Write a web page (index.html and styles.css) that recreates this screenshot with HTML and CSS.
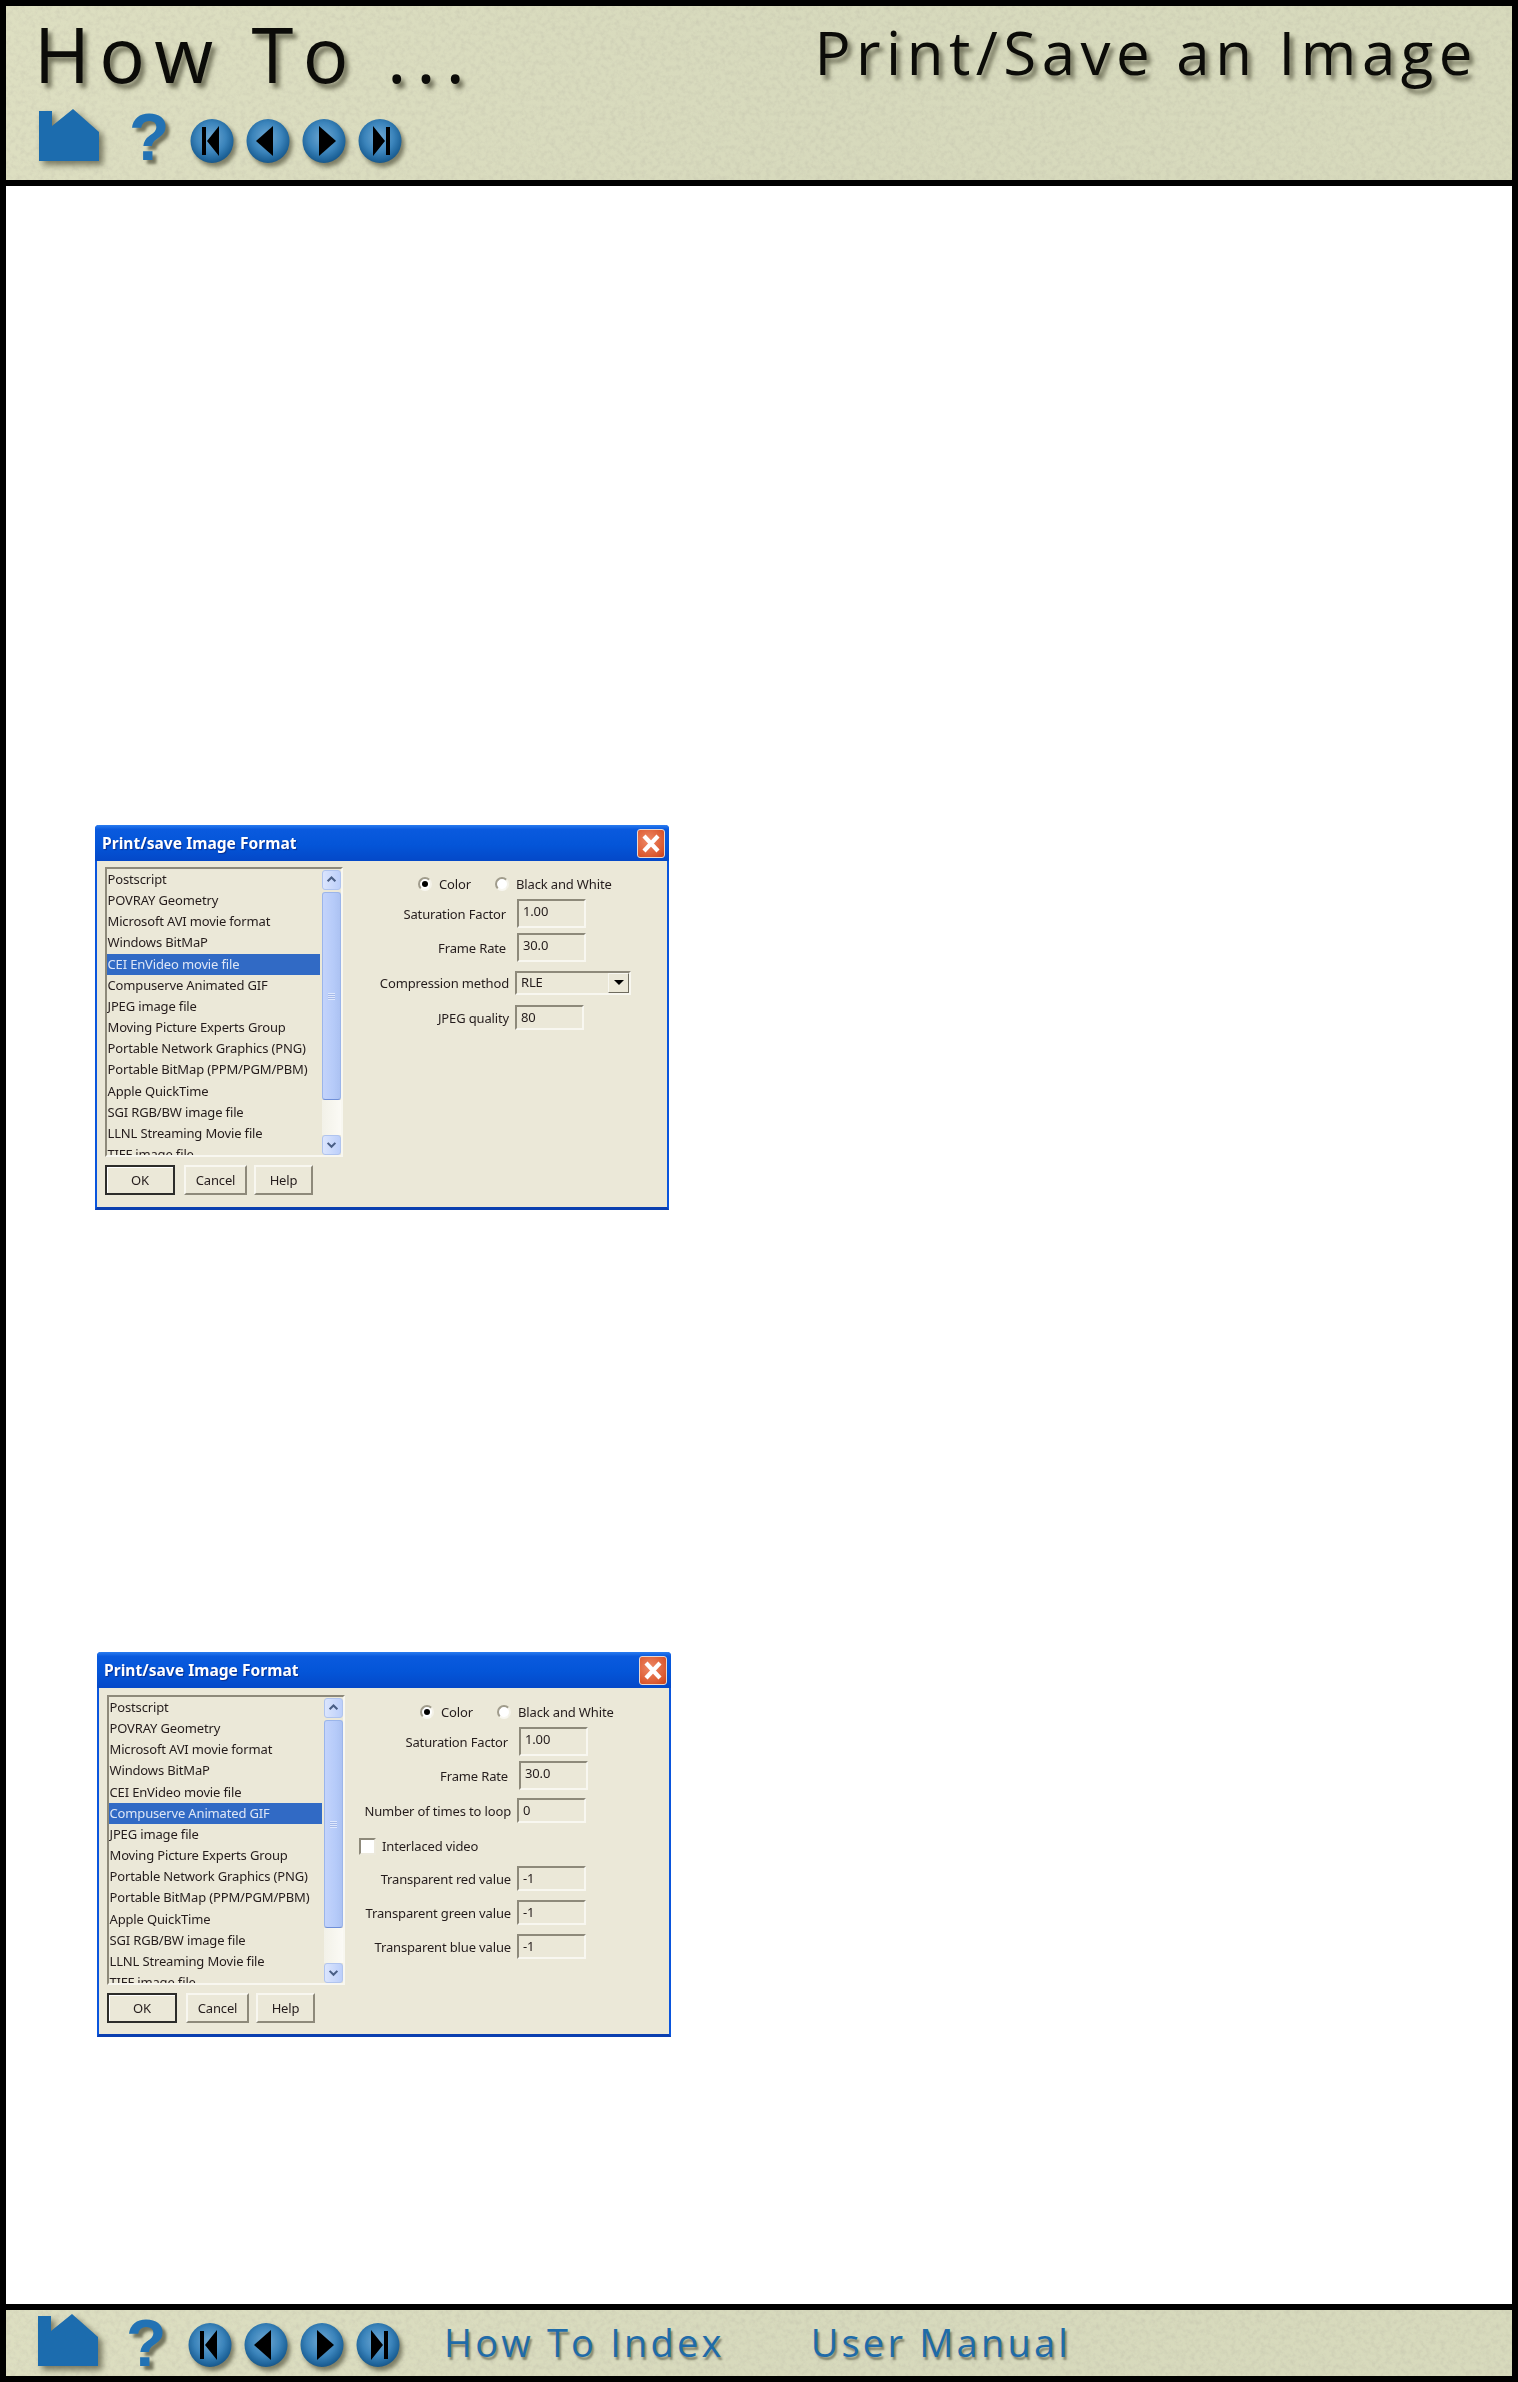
FILE: index.html
```
<!DOCTYPE html>
<html lang="en">
<head>
<meta charset="utf-8">
<title>How To Print/Save an Image</title>
<link rel="stylesheet" href="styles.css">
</head>
<body>
<svg class="defs" width="0" height="0" aria-hidden="true">
  <defs>
    <radialGradient id="orb" cx="0.48" cy="0.42" r="0.62">
      <stop offset="0" stop-color="#6fa9d4"/>
      <stop offset="0.55" stop-color="#3b84bb"/>
      <stop offset="0.85" stop-color="#1d6298"/>
      <stop offset="1" stop-color="#164f7e"/>
    </radialGradient>
    <symbol id="house" viewBox="0 0 60 52">
      <path d="M0 2H13V17L34 0L60 23V52H0Z" fill="#1c6cae"/>
    </symbol>
    <symbol id="first" viewBox="0 0 44 44">
      <ellipse cx="22" cy="22" rx="21.5" ry="22" fill="url(#orb)"/>
      <path d="M12 8H16V36H12ZM29 7V37L17 22Z" fill="#000"/>
    </symbol>
    <symbol id="prev" viewBox="0 0 44 44">
      <ellipse cx="22" cy="22" rx="21.5" ry="22" fill="url(#orb)"/>
      <path d="M27 7V37L10 22Z" fill="#000"/>
    </symbol>
    <symbol id="next" viewBox="0 0 44 44">
      <ellipse cx="22" cy="22" rx="21.5" ry="22" fill="url(#orb)"/>
      <path d="M17 7V37L34 22Z" fill="#000"/>
    </symbol>
    <symbol id="last" viewBox="0 0 44 44">
      <ellipse cx="22" cy="22" rx="21.5" ry="22" fill="url(#orb)"/>
      <path d="M15 7V37L27 22ZM28 8H32V36H28Z" fill="#000"/>
    </symbol>
    <symbol id="scroll-up" viewBox="0 0 19 21">
      <path d="M5 12L9.5 7.5L14 12" fill="none" stroke="#4a5f86" stroke-width="2.4"/>
    </symbol>
    <symbol id="scroll-down" viewBox="0 0 19 21">
      <path d="M5 8L9.5 12.5L14 8" fill="none" stroke="#4a5f86" stroke-width="2.4"/>
    </symbol>
    <symbol id="close" viewBox="0 0 28 29">
      <path d="M7 7L21 22M21 7L7 22" stroke="#fff" stroke-width="4.2" fill="none"/>
    </symbol>
  </defs>
</svg>

<div class="page">
  <header class="banner banner-top">
    <div class="title-row">
      <div class="how-to">How To ...</div>
      <div class="topic">Print/Save an Image</div>
    </div>
    <nav class="nav nav-top">
      <svg class="ico-house"><use href="#house"/></svg>
      <span class="ico-help">?</span>
      <div class="orbs">
        <svg class="ico-orb"><use href="#first"/></svg>
        <svg class="ico-orb"><use href="#prev"/></svg>
        <svg class="ico-orb"><use href="#next"/></svg>
        <svg class="ico-orb"><use href="#last"/></svg>
      </div>
    </nav>
  </header>

  <main class="content">
    <section class="dialog dialog-a">
      <div class="titlebar">
        <span class="title-text">Print/save Image Format</span>
        <span class="close-btn"><svg class="close-x"><use href="#close"/></svg></span>
      </div>
      <div class="body">
        <div class="left">
          <div class="listbox">
            <ul class="list">
              <li>Postscript</li>
              <li>POVRAY Geometry</li>
              <li>Microsoft AVI movie format</li>
              <li>Windows BitMaP</li>
              <li class="sel">CEI EnVideo movie file</li>
              <li>Compuserve Animated GIF</li>
              <li>JPEG image file</li>
              <li>Moving Picture Experts Group</li>
              <li>Portable Network Graphics (PNG)</li>
              <li>Portable BitMap (PPM/PGM/PBM)</li>
              <li>Apple QuickTime</li>
              <li>SGI RGB/BW image file</li>
              <li>LLNL Streaming Movie file</li>
              <li>TIFF image file</li>
            </ul>
            <div class="scrollbar">
              <div class="sb-btn"><svg class="sb-arrow"><use href="#scroll-up"/></svg></div>
              <div class="sb-thumb"><span class="grip"></span></div>
              <div class="sb-track"></div>
              <div class="sb-btn"><svg class="sb-arrow"><use href="#scroll-down"/></svg></div>
            </div>
          </div>
          <div class="buttons">
            <button class="btn btn-ok">OK</button>
            <button class="btn btn-cancel">Cancel</button>
            <button class="btn btn-help">Help</button>
          </div>
        </div>
        <div class="form">
          <div class="radios">
            <span class="radio radio-on"></span><span class="radio-label">Color</span>
            <span class="radio"></span><span class="radio-label">Black and White</span>
          </div>
          <div class="row row-tall"><span class="lbl">Saturation Factor</span><span class="field">1.00</span></div>
          <div class="row row-tall"><span class="lbl">Frame Rate</span><span class="field">30.0</span></div>
          <div class="row row-short row-gap8"><span class="lbl">Compression method</span>
            <span class="select">RLE<span class="select-btn"><span class="caret"></span></span></span></div>
          <div class="row row-short row-gap10"><span class="lbl">JPEG quality</span><span class="field">80</span></div>
        </div>
      </div>
    </section>

    <section class="dialog dialog-b">
      <div class="titlebar">
        <span class="title-text">Print/save Image Format</span>
        <span class="close-btn"><svg class="close-x"><use href="#close"/></svg></span>
      </div>
      <div class="body">
        <div class="left">
          <div class="listbox">
            <ul class="list">
              <li>Postscript</li>
              <li>POVRAY Geometry</li>
              <li>Microsoft AVI movie format</li>
              <li>Windows BitMaP</li>
              <li>CEI EnVideo movie file</li>
              <li class="sel">Compuserve Animated GIF</li>
              <li>JPEG image file</li>
              <li>Moving Picture Experts Group</li>
              <li>Portable Network Graphics (PNG)</li>
              <li>Portable BitMap (PPM/PGM/PBM)</li>
              <li>Apple QuickTime</li>
              <li>SGI RGB/BW image file</li>
              <li>LLNL Streaming Movie file</li>
              <li>TIFF image file</li>
            </ul>
            <div class="scrollbar">
              <div class="sb-btn"><svg class="sb-arrow"><use href="#scroll-up"/></svg></div>
              <div class="sb-thumb"><span class="grip"></span></div>
              <div class="sb-track"></div>
              <div class="sb-btn"><svg class="sb-arrow"><use href="#scroll-down"/></svg></div>
            </div>
          </div>
          <div class="buttons">
            <button class="btn btn-ok">OK</button>
            <button class="btn btn-cancel">Cancel</button>
            <button class="btn btn-help">Help</button>
          </div>
        </div>
        <div class="form">
          <div class="radios">
            <span class="radio radio-on"></span><span class="radio-label">Color</span>
            <span class="radio"></span><span class="radio-label">Black and White</span>
          </div>
          <div class="row row-tall"><span class="lbl">Saturation Factor</span><span class="field">1.00</span></div>
          <div class="row row-tall"><span class="lbl">Frame Rate</span><span class="field">30.0</span></div>
          <div class="row row-short row-gap8"><span class="lbl">Number of times to loop</span><span class="field">0</span></div>
          <div class="check-row"><span class="checkbox"></span><span class="check-label">Interlaced video</span></div>
          <div class="row row-short row-gap11"><span class="lbl">Transparent red value</span><span class="field">-1</span></div>
          <div class="row row-short row-gap9"><span class="lbl">Transparent green value</span><span class="field">-1</span></div>
          <div class="row row-short row-gap9"><span class="lbl">Transparent blue value</span><span class="field">-1</span></div>
        </div>
      </div>
    </section>
  </main>

  <footer class="banner banner-bottom">
    <nav class="nav nav-bottom">
      <svg class="ico-house ico-house-foot"><use href="#house"/></svg>
      <span class="ico-help ico-help-foot">?</span>
      <div class="orbs orbs-foot">
        <svg class="ico-orb"><use href="#first"/></svg>
        <svg class="ico-orb"><use href="#prev"/></svg>
        <svg class="ico-orb"><use href="#next"/></svg>
        <svg class="ico-orb"><use href="#last"/></svg>
      </div>
      <a class="foot-link foot-index">How To Index</a>
      <a class="foot-link foot-manual">User Manual</a>
    </nav>
  </footer>
</div>
</body>
</html>
```

FILE: styles.css
```
* { box-sizing: border-box; }

html, body { margin: 0; padding: 0; background: #fff; }

.defs { position: absolute; }

.page {
  width: 1518px;
  height: 2382px;
  border: 6px solid #000;
  display: flex;
  flex-direction: column;
  background: #fff;
  overflow: hidden;
}

.banner {
  background-color: #dadcc0;
  background-image:
    linear-gradient(90deg, rgba(230,230,196,.25), rgba(206,210,178,.25) 55%, rgba(208,212,178,.25)),
    url("data:image/svg+xml,%3Csvg xmlns='http://www.w3.org/2000/svg' width='400' height='200'%3E%3Cfilter id='n' x='0' y='0' width='100%25' height='100%25'%3E%3CfeTurbulence type='fractalNoise' baseFrequency='.2' numOctaves='3' seed='7' stitchTiles='stitch'/%3E%3CfeColorMatrix values='0 0 0 0 .6 0 0 0 0 .6 0 0 0 0 .46 1.9 0 0 0 -.75'/%3E%3C/filter%3E%3Crect width='400' height='200' filter='url(%23n)'/%3E%3C/svg%3E");
}

.banner-top {
  flex: none;
  height: 180px;
  border-bottom: 6px solid #000;
  padding-left: 28px;
  padding-right: 34px;
}

.title-row {
  display: flex;
  justify-content: space-between;
  height: 103px;
}

.how-to {
  font-family: "Open Sans", "Liberation Sans", sans-serif;
  font-weight: 400;
  font-size: 76px;
  line-height: 96px;
  letter-spacing: 9.3px;
  color: #0b0b08;
  white-space: nowrap;
  text-shadow: 4px 5px 4px rgba(50,50,30,.6);
}

.topic {
  font-family: "Open Sans", "Liberation Sans", sans-serif;
  font-weight: 400;
  font-size: 60px;
  line-height: 92px;
  letter-spacing: 5.5px;
  color: #0b0b08;
  white-space: nowrap;
  text-shadow: 4px 5px 4px rgba(50,50,30,.6);
}

.nav { display: flex; align-items: flex-start; }

.nav-top { padding-left: 5px; }

.ico-house {
  flex: none;
  width: 60px;
  height: 52px;
  overflow: visible;
  filter: drop-shadow(4px 4px 3px rgba(50,50,30,.6));
}

.ico-help {
  flex: none;
  width: 40px;
  margin-left: 30px;
  font-family: "Liberation Sans", sans-serif;
  font-weight: 700;
  font-size: 66px;
  line-height: 56px;
  color: #2272b4;
  text-align: center;
  text-shadow: 4px 4px 3px rgba(50,50,30,.6);
}

.orbs {
  display: flex;
  gap: 12px;
  margin-left: 21px;
  padding-top: 10px;
}

.ico-orb {
  flex: none;
  width: 44px;
  height: 44px;
  overflow: visible;
  filter: drop-shadow(3px 4px 2px rgba(50,50,30,.55));
}

.content {
  flex: 1;
  min-height: 0;
  background: #fff;
}

/* dialogs */
.dialog {
  width: 574px;
  height: 385px;
  background: #ebe8d8;
  border-left: 2px solid #0a55dd;
  border-right: 2px solid #0a55dd;
  border-bottom: 3px solid #0b3fb0;
  border-radius: 4px 4px 0 0;
  display: flex;
  flex-direction: column;
  font-family: "Noto Sans", "Liberation Sans", sans-serif;
  font-size: 13px;
  letter-spacing: -0.15px;
  color: #241c1c;
  filter: blur(.35px);
}

.dialog-a { margin: 639px 0 0 89px; }
.dialog-b { margin: 442px 0 0 91px; }

.titlebar {
  flex: none;
  height: 36px;
  margin: 0 -2px;
  padding: 0 4px 0 7px;
  background: linear-gradient(180deg, #2a7cf0 0, #0a5ade 12%, #0455d8 55%, #0448c8 100%);
  border-radius: 4px 4px 0 0;
  display: flex;
  align-items: center;
  justify-content: space-between;
}

.title-text {
  color: #fff;
  font-family: "Noto Sans", "Liberation Sans", sans-serif;
  font-weight: 700;
  font-size: 15.6px;
  letter-spacing: 0;
  text-shadow: 1px 1px 1px #0a2f90;
  white-space: nowrap;
}

.close-btn {
  flex: none;
  width: 28px;
  height: 29px;
  border: 1px solid #e8d8d0;
  border-radius: 3px;
  background: radial-gradient(circle at 40% 40%, #ee8a68, #dc5a30 70%, #c8401c);
  display: flex;
  align-items: center;
  justify-content: center;
}

.close-x { width: 28px; height: 29px; flex: none; }

.body { flex: 1; display: flex; min-height: 0; padding: 6px 0 0 8px; }
.dialog-b .body { padding-top: 7px; }

.left { flex: none; width: 238px; }

.listbox {
  display: flex;
  height: 290px;
  border: 1px solid;
  border-width: 2px 2px 2px 2px;
  border-color: #8d897a #f8f7f0 #f8f7f0 #8d897a;
  overflow: hidden;
}

.list {
  flex: none;
  width: 213px;
  margin: 0;
  padding: 0;
  list-style: none;
  overflow: hidden;
}

.list li {
  height: 21.17px;
  line-height: 20px;
  padding-left: 0.5px;
  white-space: nowrap;
}

.list .sel { background: #316ac5; color: #dde6f6; }

.scrollbar {
  flex: none;
  width: 19px;
  margin-left: 2px;
  padding-top: 1px;
  display: flex;
  flex-direction: column;
  gap: 2px;
}

.sb-btn {
  flex: none;
  height: 20px;
  background: linear-gradient(90deg, #dbe5fd, #bccffa);
  border: 1px solid #b0c4ee;
  border-radius: 3px;
}

.sb-arrow { width: 17px; height: 18px; display: block; }

.sb-thumb {
  flex: none;
  height: 208px;
  background: linear-gradient(90deg, #c3d3fb, #b6cbf9 60%, #acc2f2);
  border: 1px solid #9bb5ea;
  border-bottom-color: #6f8fd8;
  border-radius: 3px;
  display: flex;
  align-items: center;
  justify-content: center;
}

.grip {
  display: block;
  width: 7px;
  height: 7px;
  background: repeating-linear-gradient(180deg, #dfe8fd 0 1px, #a4b9ea 1px 2px);
}

.sb-track { flex: 1; background: linear-gradient(90deg, #f2f1e8, #fbfaf5); margin: -2px 0; }

.buttons {
  display: flex;
  margin-top: 8px;
}

.btn {
  height: 30px;
  padding: 0;
  font: inherit;
  letter-spacing: inherit;
  color: #241c1c;
  background: #ebe8d8;
  border: 2px solid;
  border-color: #f8f7f0 #8d897a #8d897a #f8f7f0;
}

.btn-ok {
  width: 70px;
  border-color: #2c2c2a #2c2c2a #2c2c2a #2c2c2a;
  box-shadow: inset 1px 1px 0 #fff;
}
.btn-cancel { width: 63px; margin-left: 9px; }
.btn-help { width: 59px; margin-left: 7px; }

.form { flex: none; width: 320px; padding-top: 7px; }

.radios {
  height: 19px;
  margin-bottom: 6px;
  display: flex;
  align-items: center;
  padding-left: 75px;
}

.radio {
  flex: none;
  width: 14px;
  height: 14px;
  border-radius: 50%;
  background: #fff;
  border: 2px solid;
  border-color: #a09c8c #f4f2e8 #f8f7f0 #a09c8c;
  display: flex;
  align-items: center;
  justify-content: center;
}

.radio-on::after {
  content: "";
  width: 6px;
  height: 6px;
  border-radius: 50%;
  background: #000;
}

.radio-label { margin-left: 7px; white-space: nowrap; }
.radio-label:nth-child(2) { width: 56px; }

.row { display: flex; align-items: center; margin-top: 5px; }
.row-tall { height: 29px; }
.row-short { height: 25px; }
.row-gap8 { margin-top: 8px; }
.row-gap9 { margin-top: 9px; }
.row-gap10 { margin-top: 10px; }
.row-gap11 { margin-top: 11px; }

.radios + .row { margin-top: 0; }

.lbl {
  flex: none;
  text-align: right;
  white-space: nowrap;
}

.row-tall .lbl { width: 163px; margin-right: 11px; }
.row-short .lbl { width: 166px; margin-right: 6px; }

.field {
  flex: none;
  width: 69px;
  height: 100%;
  padding: 0 0 0 4px;
  line-height: 20px;
  border: 2px solid;
  border-color: #8d897a #f8f7f0 #f8f7f0 #8d897a;
}

.select {
  flex: none;
  width: 116px;
  height: 24px;
  padding-left: 4px;
  line-height: 19px;
  display: flex;
  justify-content: space-between;
  border: 2px solid;
  border-color: #8d897a #f8f7f0 #f8f7f0 #8d897a;
}

.select-btn {
  flex: none;
  width: 21px;
  height: 20px;
  border: 1px solid;
  border-color: #f8f7f0 #6e6b5e #6e6b5e #f8f7f0;
  display: flex;
  align-items: center;
  justify-content: center;
}

.caret {
  width: 0;
  height: 0;
  border-left: 5px solid transparent;
  border-right: 5px solid transparent;
  border-top: 5px solid #000;
}

.check-row {
  display: flex;
  align-items: center;
  height: 18px;
  margin-top: 14px;
  padding-left: 14px;
}

.checkbox {
  flex: none;
  width: 17px;
  height: 17px;
  background: #fff;
  border: 2px solid;
  border-color: #8d897a #ece9dc #ece9dc #8d897a;
}

.check-label { margin-left: 6px; white-space: nowrap; }

/* footer */
.banner-bottom {
  flex: none;
  height: 72px;
  border-top: 6px solid #000;
  padding-left: 32px;
}

.nav-bottom { height: 66px; padding-top: 3px; }

.ico-house-foot { height: 54px; }

.ico-help-foot { margin-left: 28px; line-height: 60px; }

.orbs-foot { padding-top: 10px; margin-left: 22px; }

.foot-link {
  font-family: "Open Sans", "Liberation Sans", sans-serif;
  font-weight: 400;
  font-size: 38px;
  line-height: 58px;
  letter-spacing: 3.2px;
  color: #1f6ba8;
  white-space: nowrap;
  text-shadow: 2px 3px 2px rgba(50,50,30,.5);
}

.foot-index { margin-left: 44px; }
.foot-manual { margin-left: 86px; }
```
